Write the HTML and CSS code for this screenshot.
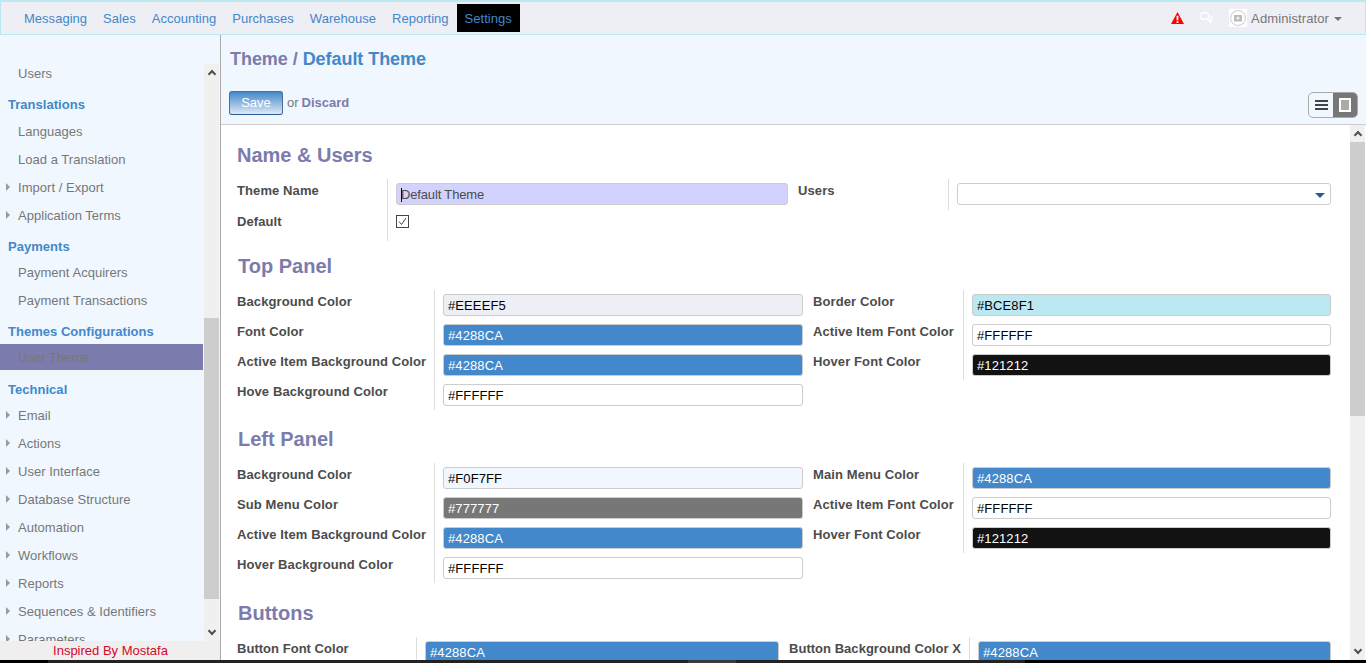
FILE: index.html
```html
<!DOCTYPE html>
<html lang="en">
<head>
    <meta charset="UTF-8">
    <title>Default Theme</title>
    <link rel="stylesheet" href="styles.css">
</head>
<body>
    <div class="app">
        <nav class="topbar">
            <ul class="topmenu">
                <li>Messaging</li>
                <li>Sales</li>
                <li>Accounting</li>
                <li>Purchases</li>
                <li>Warehouse</li>
                <li>Reporting</li>
                <li class="active">Settings</li>
            </ul>
            <div class="topright">
                <svg class="alert" width="13" height="12" viewBox="0 0 14 13"><path d="M7 0 14 13H0z" fill="#f00"/><path d="M6 4h2v5H6zM6 10h2v2H6z" fill="#fff"/></svg>
                <svg class="chat" width="14" height="12" viewBox="0 0 14 12"><ellipse cx="5.5" cy="4" rx="4.5" ry="3.2" fill="none" stroke="#fff" stroke-width="1.6"/><path d="M8 7.6c2 .9 2.8 1 3.6 2.4l.4-2.2c1-1 1-2.3.3-3.3" fill="none" stroke="#fff" stroke-width="1.6"/></svg>
                <span class="avatar">
                    <svg width="18" height="18" viewBox="0 0 18 18"><circle cx="9" cy="9" r="7.5" fill="none" stroke="#ddd" stroke-width="1.5"/><rect x="5" y="6" width="8" height="6.5" fill="#bbb"/><circle cx="9" cy="9" r="1.6" fill="#eee"/></svg>
                </span>
                <span class="username">Administrator</span>
                <span class="caret"></span>
            </div>
        </nav>

        <div class="columns">
            <aside class="sidebar">
                <div class="side-body">
                    <ul class="sidemenu">
                        <li class="item">Users</li>
                        <li class="group">Translations</li>
                        <li class="item">Languages</li>
                        <li class="item">Load a Translation</li>
                        <li class="item sub">Import / Export</li>
                        <li class="item sub">Application Terms</li>
                        <li class="group">Payments</li>
                        <li class="item">Payment Acquirers</li>
                        <li class="item">Payment Transactions</li>
                        <li class="group">Themes Configurations</li>
                        <li class="item current">User Theme</li>
                        <li class="group">Technical</li>
                        <li class="item sub">Email</li>
                        <li class="item sub">Actions</li>
                        <li class="item sub">User Interface</li>
                        <li class="item sub">Database Structure</li>
                        <li class="item sub">Automation</li>
                        <li class="item sub">Workflows</li>
                        <li class="item sub">Reports</li>
                        <li class="item sub">Sequences &amp; Identifiers</li>
                        <li class="item sub">Parameters</li>
                    </ul>
                    <div class="scroll scroll-left">
                        <span class="scroll-btn up"></span>
                        <span class="scroll-thumb"></span>
                        <span class="scroll-btn down"></span>
                    </div>
                </div>
                <div class="side-foot">Inspired By Mostafa</div>
            </aside>

            <main class="main">
                <header class="head">
                    <h1><span class="crumb">Theme /</span> <span class="crumb-cur">Default Theme</span></h1>
                    <div class="actions">
                        <div class="save-row">
                            <button class="save">Save</button>
                            <span class="or">or</span>
                            <span class="discard">Discard</span>
                        </div>
                        <div class="switcher">
                            <span class="sw">
                                <svg width="13" height="10" viewBox="0 0 13 10"><path d="M0 0h13v2H0zM0 4h13v2H0zM0 8h13v2H0z" fill="#444"/></svg>
                            </span>
                            <span class="sw on">
                                <svg width="12" height="14" viewBox="0 0 12 14"><rect x="1" y="1" width="10" height="12" fill="#aaa" stroke="#fff" stroke-width="2"/></svg>
                            </span>
                        </div>
                    </div>
                </header>

                <div class="form-wrap">
                    <div class="form">
                        <h2 class="first">Name &amp; Users</h2>
                        <div class="grid grid-name">
                            <div class="lbl">Theme Name</div>
                            <div class="val"><div class="inp req"><span class="cursor"></span>Default Theme</div></div>
                            <div class="lbl">Users</div>
                            <div class="val"><div class="inp select"><span class="arrow"></span></div></div>
                            <div class="lbl">Default</div>
                            <div class="val"><span class="check"><svg width="13" height="13" viewBox="0 0 13 13"><rect x=".5" y=".5" width="12" height="12" fill="#fff" stroke="#444"/><path d="M3 6.5 5.5 9.5 10 3" fill="none" stroke="#444"/></svg></span></div>
                            <div class="lbl"></div>
                            <div class="val none"></div>
                        </div>

                        <h2 class="h-top">Top Panel</h2>
                        <div class="grid grid-panel">
                            <div class="lbl">Background Color</div>
                            <div class="val"><div class="inp c-eee">#EEEEF5</div></div>
                            <div class="lbl">Border Color</div>
                            <div class="val"><div class="inp c-bce">#BCE8F1</div></div>
                            <div class="lbl">Font Color</div>
                            <div class="val"><div class="inp c-blue">#4288CA</div></div>
                            <div class="lbl">Active Item Font Color</div>
                            <div class="val"><div class="inp">#FFFFFF</div></div>
                            <div class="lbl">Active Item Background Color</div>
                            <div class="val"><div class="inp c-blue">#4288CA</div></div>
                            <div class="lbl">Hover Font Color</div>
                            <div class="val"><div class="inp c-black">#121212</div></div>
                            <div class="lbl">Hove Background Color</div>
                            <div class="val"><div class="inp">#FFFFFF</div></div>
                        </div>

                        <h2>Left Panel</h2>
                        <div class="grid grid-panel">
                            <div class="lbl">Background Color</div>
                            <div class="val"><div class="inp c-f0">#F0F7FF</div></div>
                            <div class="lbl">Main Menu Color</div>
                            <div class="val"><div class="inp c-blue">#4288CA</div></div>
                            <div class="lbl">Sub Menu Color</div>
                            <div class="val"><div class="inp c-gray">#777777</div></div>
                            <div class="lbl">Active Item Font Color</div>
                            <div class="val"><div class="inp">#FFFFFF</div></div>
                            <div class="lbl">Active Item Background Color</div>
                            <div class="val"><div class="inp c-blue">#4288CA</div></div>
                            <div class="lbl">Hover Font Color</div>
                            <div class="val"><div class="inp c-black">#121212</div></div>
                            <div class="lbl">Hover Background Color</div>
                            <div class="val"><div class="inp">#FFFFFF</div></div>
                        </div>

                        <h2 class="h-btn">Buttons</h2>
                        <div class="grid grid-btn">
                            <div class="lbl">Button Font Color</div>
                            <div class="val"><div class="inp c-blue">#4288CA</div></div>
                            <div class="lbl">Button Background Color X</div>
                            <div class="val"><div class="inp c-blue">#4288CA</div></div>
                        </div>
                    </div>
                    <div class="scroll scroll-main">
                        <span class="scroll-btn up"></span>
                        <span class="scroll-thumb"></span>
                        <span class="scroll-btn down"></span>
                    </div>
                </div>
            </main>
        </div>
    </div>
    <div class="bottom-strip"><span class="strip-mark"></span></div>
</body>
</html>
```

FILE: styles.css
```css
html, body {
    margin: 0;
    height: 100%;
    overflow: hidden;
    background-color: #000;
}
body {
    font-family: "Liberation Sans", Arial, sans-serif;
    font-size: 13px;
    color: #4c4c4c;
}
ul {
    list-style: none;
    margin: 0;
    padding: 0;
}
.app {
    height: 660px;
    display: flex;
    flex-direction: column;
    overflow: hidden;
}
.bottom-strip {
    height: 3px;
    margin: 0 341px 0 48px;
    background-color: #222;
    display: flex;
    padding-left: 640px;
}
.strip-mark {
    width: 48px;
    background-color: #3a3a3a;
}

/* top bar */
.topbar {
    height: 35px;
    box-sizing: border-box;
    flex: none;
    display: flex;
    justify-content: space-between;
    background-color: #eeeef5;
    border: 1px solid #bce8f1;
    border-top-width: 2px;
}
.topmenu {
    display: flex;
    padding: 2px 0 0 15px;
}
.topmenu li {
    padding: 0 8px;
    height: 28px;
    line-height: 30px;
    color: #4288ca;
    font-size: 13px;
    letter-spacing: 0.02px;
}
.topmenu li.active {
    background-color: #000;
}
.topright {
    display: flex;
    align-items: center;
    padding-right: 23px;
    color: #777;
}
.alert {
    margin-right: 15px;
}
.chat {
    margin-right: 16px;
}
.avatar {
    width: 18px;
    height: 18px;
    background-color: #fff;
    margin-right: 4px;
    display: flex;
}
.username {
    font-size: 13px;
    letter-spacing: 0.1px;
}
.caret {
    margin: 2px 0 0 5px;
    border-left: 4px solid transparent;
    border-right: 4px solid transparent;
    border-top: 4px solid #777;
}

.columns {
    flex: 1;
    display: flex;
    min-height: 0;
}

/* left panel */
.sidebar {
    width: 221px;
    box-sizing: border-box;
    flex: none;
    display: flex;
    flex-direction: column;
    background-color: #f0f7ff;
    border-right: 1px solid #aaa;
    padding-top: 29px;
}
.side-body {
    flex: 1;
    min-height: 0;
    display: flex;
}
.sidemenu {
    flex: 1;
    overflow: hidden;
    letter-spacing: 0.03px;
}
.sidemenu .group {
    height: 29.5px;
    line-height: 25px;
    padding-left: 8px;
    font-weight: bold;
    color: #4288ca;
}
.sidemenu .item {
    height: 28px;
    line-height: 19px;
    padding-left: 18px;
    color: #777;
    position: relative;
}
.sidemenu .sub::before {
    content: "";
    position: absolute;
    left: 6px;
    top: 5px;
    border-top: 4px solid transparent;
    border-bottom: 4px solid transparent;
    border-left: 4px solid #999;
}
.sidemenu .current {
    background-color: #7c7bad;
    height: 26px;
    line-height: 28px;
    margin: -4.5px 1px 6.5px 0;
}
.side-foot {
    flex: none;
    height: 19px;
    line-height: 20px;
    background-color: #f0eeee;
    color: #d4082a;
    text-align: center;
    font-size: 13px;
    padding-left: 1px;
}

/* hand drawn scrollbars */
.scroll {
    width: 15px;
    flex: none;
    display: flex;
    flex-direction: column;
    background-color: #f0f0f0;
    margin-right: 1px;
}
.scroll-btn {
    height: 17px;
    flex: none;
    position: relative;
}
.scroll-btn::before {
    content: "";
    position: absolute;
    left: 5px;
    width: 6px;
    height: 6px;
    border-left: 2px solid #505050;
    border-top: 2px solid #505050;
    box-sizing: border-box;
}
.scroll-btn.up::before {
    top: 7px;
    transform: rotate(45deg);
}
.scroll-btn.down::before {
    top: 4px;
    transform: rotate(225deg);
}
.scroll-thumb {
    background-color: #cdcdcd;
    flex: none;
}
.scroll-left .scroll-thumb {
    height: 281px;
    margin-top: 237px;
    margin-bottom: auto;
}
.scroll-main .scroll-thumb {
    height: 274px;
    margin-bottom: auto;
}

/* main column */
.main {
    flex: 1;
    min-width: 0;
    display: flex;
    flex-direction: column;
}
.head {
    height: 90px;
    box-sizing: border-box;
    flex: none;
    background-color: #f0f7ff;
    border-bottom: 1px solid #ccc;
    padding: 0 8px 0 9px;
}
h1 {
    margin: 0;
    padding-top: 13px;
    height: 45px;
    box-sizing: border-box;
    font-size: 18px;
    line-height: 22px;
    font-weight: bold;
    letter-spacing: -0.05px;
}
.crumb {
    color: #7c7bad;
}
.crumb-cur {
    color: #4288ca;
}
.actions {
    display: flex;
    justify-content: space-between;
    align-items: flex-start;
    padding-top: 11px;
}
.save-row {
    display: flex;
    align-items: center;
    height: 24px;
    margin-left: -1px;
}
.save {
    width: 54px;
    height: 24px;
    padding: 0 0 2px;
    font: 13px "Liberation Sans", Arial, sans-serif;
    color: #fff;
    background: linear-gradient(#4288ca, #dfe9f5);
    border: 1px solid #4a6d9c;
    border-bottom-color: #2a5a94;
    border-radius: 3px;
    margin-right: 4px;
}
.or {
    color: #777;
    font-size: 13px;
    margin-right: 3px;
    padding-bottom: 2px;
}
.discard {
    color: #7c7bad;
    font-size: 13px;
    font-weight: bold;
    padding-bottom: 2px;
}
.switcher {
    display: flex;
    height: 26px;
    margin-top: 1px;
    border: 1px solid #aaa;
    border-radius: 5px;
    overflow: hidden;
    box-sizing: border-box;
}
.sw {
    width: 24px;
    display: flex;
    align-items: center;
    justify-content: center;
}
.sw.on {
    background-color: #777;
}

/* form */
.form-wrap {
    flex: 1;
    min-height: 0;
    display: flex;
    background-color: #fff;
}
.form {
    flex: 1;
    min-width: 0;
    overflow: hidden;
    padding: 0 19px 0 16px;
}
h2 {
    margin: 17px 0 0;
    height: 24px;
    font-size: 20px;
    line-height: 24px;
    font-weight: bold;
    color: #7c7bad;
    padding-left: 1px;
}
h2.first {
    margin-top: 18px;
    padding-left: 0;
}
h2.h-top {
    margin-top: 13px;
}
h2.h-btn {
    margin-top: 18px;
}
.grid {
    display: grid;
    margin-top: 12px;
}
.grid-name {
    grid-template-columns: 150px 411px 150px 1fr;
    grid-auto-rows: 31px;
}
.grid-panel {
    grid-template-columns: 197px 379px 150px 1fr;
    grid-auto-rows: 30px;
}
.grid-btn {
    grid-template-columns: 179px 373px 180px 1fr;
    grid-auto-rows: 30px;
}
.lbl {
    font-weight: bold;
    line-height: 16px;
    padding-top: 4px;
    color: #4c4c4c;
    white-space: nowrap;
    letter-spacing: 0.1px;
}
.grid-btn .lbl {
    letter-spacing: 0.03px;
}
.val {
    border-left: 1px solid #ddd;
    padding: 4px 0 0 8px;
}
.val.none {
    border-left: 0;
}
.grid-panel .val:nth-child(4n+2),
.grid-name .val:nth-child(4n+2),
.grid-btn .val:nth-child(4n+2) {
    margin-right: 10px;
}
.inp {
    height: 22px;
    box-sizing: border-box;
    border: 1px solid #ccc;
    border-radius: 3px;
    background-color: #fff;
    color: #000;
    padding-left: 4px;
    line-height: 21px;
    font-size: 13px;
    letter-spacing: 0.1px;
    position: relative;
}
.cursor {
    display: inline-block;
    width: 1px;
    height: 14px;
    background-color: #000;
    vertical-align: -3px;
    margin-right: -1px;
}
.req {
    background-color: #d2d2ff;
    color: #4c4c4c;
    letter-spacing: -0.15px;
}
.arrow {
    position: absolute;
    right: 5px;
    top: 9px;
    border-left: 5px solid transparent;
    border-right: 5px solid transparent;
    border-top: 5px solid #2a5a94;
}
.check {
    display: flex;
    margin-top: 1px;
}
.c-eee {
    background-color: #eeeef5;
}
.c-bce {
    background-color: #bce8f1;
}
.c-f0 {
    background-color: #f0f7ff;
}
.c-blue {
    background-color: #4288ca;
    color: #fff;
}
.c-gray {
    background-color: #777;
    color: #fff;
}
.c-black {
    background-color: #121212;
    color: #fff;
}
```
